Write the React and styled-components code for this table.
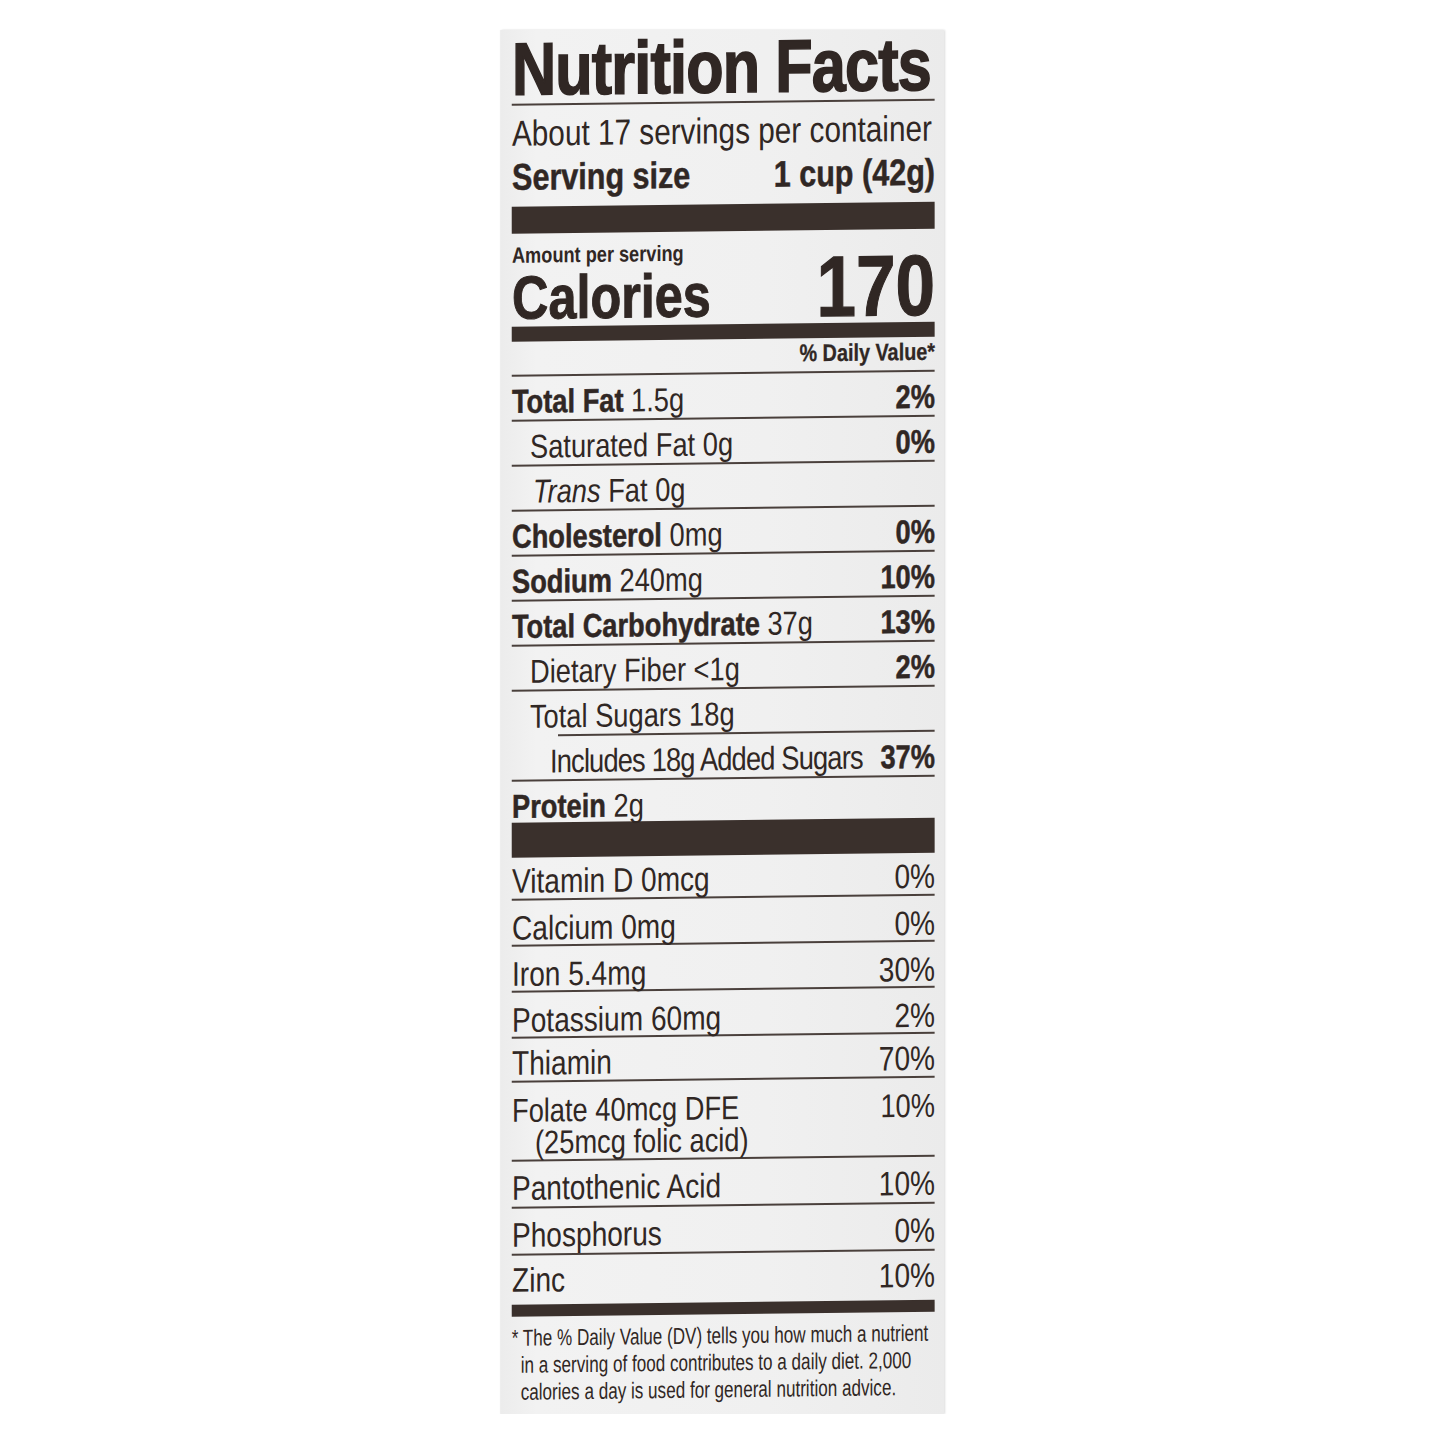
import React from 'react';
import styled, { createGlobalStyle } from 'styled-components';

const GlobalStyle = createGlobalStyle`
  html, body {
    margin: 0;
    padding: 0;
    background: #ffffff;
  }
`;

// the printed label uses a condensed face; squeeze Liberation Sans to match
const K = 0.826;
const sx = (v) => v / K;

const ink = '#302724';

const Page = styled.div`
  display: flex;
  justify-content: center;
  padding-top: 30px;
`;

const Frame = styled.div`
  width: 443px;
  background: linear-gradient(90deg, #ececec 0%, #f2f2f2 8%, #f0f0f0 60%, #ebebeb 100%);
  box-shadow: 1px 0 2px rgba(0, 0, 0, 0.14), -1px 0 1px rgba(0, 0, 0, 0.06);
`;

const Sheet = styled.div`
  width: ${sx(443)}px;
  box-sizing: border-box;
  padding: 8px ${sx(9)}px 8px ${sx(11)}px;
  transform: skewY(-0.7deg) scaleX(${K});
  transform-origin: 0 0;
  font-family: 'Liberation Sans', Arial, sans-serif;
  color: ${ink};
`;

const Title = styled.div`
  font-size: 74px;
  font-weight: 700;
  line-height: 64px;
  letter-spacing: -1px;
  white-space: nowrap;
  -webkit-text-stroke: 1.6px ${ink};
  margin-bottom: 2px;
`;

const Rule = styled.div`
  height: 2px;
  margin-left: ${(p) => sx(p.$inset || 0)}px;
  background: #4a403c;
`;

const Bar = styled.div`
  height: ${(p) => p.$h}px;
  background: #3a302c;
`;

const Servings = styled.div`
  font-size: 36px;
  line-height: 55px;
  white-space: nowrap;
`;

const ServingSize = styled.div`
  display: flex;
  justify-content: space-between;
  font-size: 37px;
  font-weight: 700;
  line-height: 34px;
  margin-bottom: 12px;
  white-space: nowrap;
  -webkit-text-stroke: 0.5px ${ink};
`;

const CaloriesBlock = styled.div`
  display: flex;
  justify-content: space-between;
  align-items: flex-end;
`;

const Amount = styled.div`
  padding-top: 12px;
  font-size: 22px;
  font-weight: 700;
  line-height: 20px;
  white-space: nowrap;
`;

const Calories = styled.div`
  padding-top: 3px;
  font-size: 61px;
  font-weight: 700;
  line-height: 58px;
  -webkit-text-stroke: 1px ${ink};
`;

const CalorieCount = styled.div`
  font-size: 86px;
  font-weight: 700;
  line-height: 74px;
  -webkit-text-stroke: 1.2px ${ink};
`;

const DailyHead = styled.div`
  text-align: right;
  font-size: 24px;
  font-weight: 700;
  line-height: 30px;
  margin-bottom: 3px;
  -webkit-text-stroke: 0.3px ${ink};
`;

const Row = styled.div`
  display: flex;
  justify-content: space-between;
  align-items: flex-end;
  box-sizing: border-box;
  height: ${(p) => p.$h}px;
  padding-left: ${(p) => sx(p.$indent || 0)}px;
  padding-bottom: ${(p) => (p.$pb === undefined ? 1 : p.$pb)}px;
  font-size: ${(p) => p.$size || 33}px;
  line-height: ${(p) => p.$lh || 1};
  letter-spacing: ${(p) => (p.$tight ? -1 : 0)}px;
  white-space: nowrap;
`;

const Name = styled.span`
  font-weight: 700;
  -webkit-text-stroke: 0.5px ${ink};
`;

const Pct = styled.div`
  font-weight: ${(p) => (p.$bold ? 700 : 400)};
  -webkit-text-stroke: ${(p) => (p.$bold ? 0.5 : 0)}px ${ink};
  margin-bottom: ${(p) => p.$up || 0}px;
  letter-spacing: 0;
`;

const SubLine = styled.div`
  padding-left: ${(p) => sx(p.$indent || 0)}px;
`;

const Footnote = styled.div`
  margin-top: 8px;
  font-size: 23px;
  line-height: 27px;
  white-space: nowrap;
  transform: scaleX(0.9);
  transform-origin: 0 0;
`;

const FootLine = styled.div`
  padding-left: ${(p) => (p.$hang ? sx(9) / 0.9 : 0)}px;
`;

const nutrients = [
  { name: 'Total Fat', amount: '1.5g', pct: '2%' },
  { label: 'Saturated Fat 0g', pct: '0%', indent: 18 },
  { trans: true, indent: 21 },
  { name: 'Cholesterol', amount: '0mg', pct: '0%' },
  { name: 'Sodium', amount: '240mg', pct: '10%' },
  { name: 'Total Carbohydrate', amount: '37g', pct: '13%' },
  { label: 'Dietary Fiber <1g', pct: '2%', indent: 18 },
  { label: 'Total Sugars 18g', indent: 18, ruleInset: 46 },
  { label: 'Includes 18g Added Sugars', pct: '37%', indent: 38, tight: true },
];

const vitamins = [
  { label: 'Vitamin D 0mcg', pct: '0%', h: 41 },
  { label: 'Calcium 0mg', pct: '0%', h: 44, pb: 0 },
  { label: 'Iron 5.4mg', pct: '30%', h: 44, pb: 0 },
  { label: 'Potassium 60mg', pct: '2%', h: 44, pb: 0 },
  { label: 'Thiamin', pct: '70%', h: 42 },
];

const vitaminsLower = [
  { label: 'Pantothenic Acid', pct: '10%', h: 45, pb: 2 },
  { label: 'Phosphorus', pct: '0%', h: 45, pb: 2 },
];

const App = () => {
  return (
    <>
      <GlobalStyle />
      <Page>
        <Frame>
          <Sheet>
            <Title>Nutrition Facts</Title>
            <Rule />
            <Servings>About 17 servings per container</Servings>
            <ServingSize>
              <span>Serving size</span>
              <span>1 cup (42g)</span>
            </ServingSize>
            <Bar $h={27} />

            <CaloriesBlock>
              <div>
                <Amount>Amount per serving</Amount>
                <Calories>Calories</Calories>
              </div>
              <CalorieCount>170</CalorieCount>
            </CaloriesBlock>
            <Bar $h={15} />
            <DailyHead>% Daily Value*</DailyHead>
            <Rule />

            {nutrients.map((n, i) => (
              <React.Fragment key={i}>
                <Row $h={43} $indent={n.indent} $pb={2} $tight={n.tight}>
                  <span>
                    {n.name && (
                      <>
                        <Name>{n.name}</Name> {n.amount}
                      </>
                    )}
                    {n.label}
                    {n.trans && (
                      <>
                        <i>Trans</i> Fat 0g
                      </>
                    )}
                  </span>
                  {n.pct && <Pct $bold>{n.pct}</Pct>}
                </Row>
                <Rule $inset={n.ruleInset} />
              </React.Fragment>
            ))}
            <Row $h={41} $pb={0}>
              <span>
                <Name>Protein</Name> 2g
              </span>
            </Row>
            <Bar $h={35} />

            {vitamins.map((v) => (
              <React.Fragment key={v.label}>
                <Row $h={v.h} $size={34} $pb={v.pb}>
                  <span>{v.label}</span>
                  <Pct>{v.pct}</Pct>
                </Row>
                <Rule />
              </React.Fragment>
            ))}
            <Row $h={77} $size={33} $lh="32px">
              <div>
                <SubLine>Folate 40mcg DFE</SubLine>
                <SubLine $indent={23}>(25mcg folic acid)</SubLine>
              </div>
              <Pct $up={32}>10%</Pct>
            </Row>
            <Rule />
            {vitaminsLower.map((v) => (
              <React.Fragment key={v.label}>
                <Row $h={v.h} $size={34} $pb={v.pb}>
                  <span>{v.label}</span>
                  <Pct>{v.pct}</Pct>
                </Row>
                <Rule />
              </React.Fragment>
            ))}
            <Row $h={49} $size={34} $pb={8}>
              <span>Zinc</span>
              <Pct>10%</Pct>
            </Row>
            <Bar $h={12} />

            <Footnote>
              <FootLine>* The % Daily Value (DV) tells you how much a nutrient</FootLine>
              <FootLine $hang>in a serving of food contributes to a daily diet. 2,000</FootLine>
              <FootLine $hang>calories a day is used for general nutrition advice.</FootLine>
            </Footnote>
          </Sheet>
        </Frame>
      </Page>
    </>
  );
};

export default App;
